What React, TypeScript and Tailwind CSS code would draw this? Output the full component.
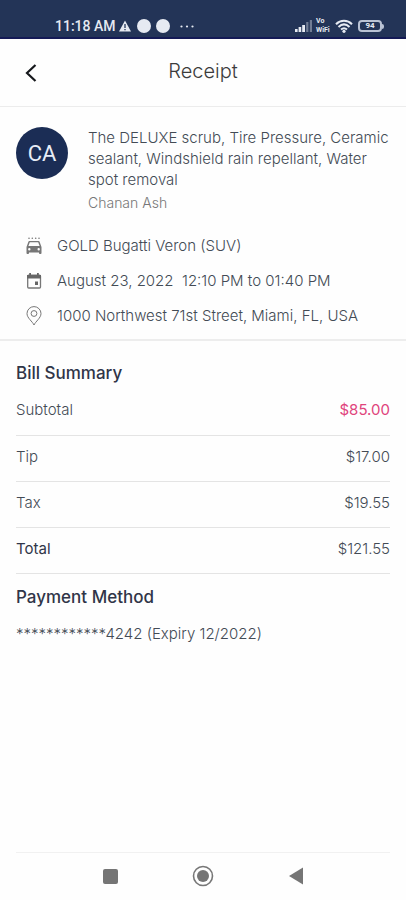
import type { ReactNode } from "react";
import { clsx } from "clsx";

type BillLine = {
  label: string;
  amount: string;
  highlight?: boolean;
  strong?: boolean;
};

const billLines: BillLine[] = [
  { label: "Subtotal", amount: "$85.00", highlight: true },
  { label: "Tip", amount: "$17.00" },
  { label: "Tax", amount: "$19.55" },
  { label: "Total", amount: "$121.55", strong: true },
];

function StatusBar() {
  return (
    <div className="flex h-[39px] items-end justify-between border-b-2 border-[#141a56] bg-[#233457] pr-[22px] pb-px pl-[55px] font-['Roboto',sans-serif] text-[#e6eaf2]">
      <div className="flex h-5 items-center">
        <span className="text-sm font-medium">11:18 AM</span>
        <svg className="ml-[3px] h-3 w-3" viewBox="0 0 12 12" aria-hidden="true">
          <path d="M6 0.5 12 11.5H0Z" fill="currentColor" />
          <path d="M6 4v4M6 9v1.3" stroke="#233457" strokeWidth="1.3" />
        </svg>
        <span className="ml-[6px] h-[14px] w-[14px] rounded-full bg-[#e6eaf2]" />
        <span className="ml-[5px] h-[14px] w-[14px] rounded-full bg-[#e6eaf2]" />
        <svg className="ml-[10px] h-[3px] w-[14px]" viewBox="0 0 14 3" fill="currentColor" aria-hidden="true">
          <circle cx="1.5" cy="1.5" r="1.1" />
          <circle cx="7" cy="1.5" r="1.1" />
          <circle cx="12.5" cy="1.5" r="1.1" />
        </svg>
      </div>
      <div className="flex h-5 items-center">
        <svg className="h-3 w-[18px]" viewBox="0 0 18 12" aria-hidden="true">
          <g fill="currentColor">
            <rect x="0" y="9" width="2.6" height="3" />
            <rect x="3.6" y="7" width="2.6" height="5" />
            <rect x="7.2" y="5" width="2.8" height="7" />
          </g>
          <g fill="currentColor" opacity="0.4">
            <rect x="11.2" y="2" width="2.2" height="10" />
            <rect x="14.8" y="0" width="2.2" height="12" />
          </g>
        </svg>
        <span className="ml-[3px] flex w-4 flex-col text-[7px] leading-[9px] font-bold">
          <span>Vo</span>
          <span>WiFi</span>
        </span>
        <svg className="ml-[3px] h-[14px] w-[18px]" viewBox="0 0 18 14" aria-hidden="true">
          <g fill="none" stroke="currentColor" strokeWidth="2">
            <path d="M1 5.2C5.5 0.6 12.5 0.6 17 5.2" />
            <path d="M3.5 8C7 4.6 11 4.6 14.5 8" />
            <path d="M6 10.6C8 8.8 10 8.8 12 10.6" />
          </g>
          <circle cx="9" cy="12.3" r="1.6" fill="currentColor" />
        </svg>
        <span className="ml-[5px] flex h-3 w-6 items-center justify-center rounded-[4px] border-2 border-[#b9c2d4] text-[8px] leading-none font-bold">
          94
        </span>
        <span className="h-[5px] w-[2px] rounded-r-sm bg-[#b9c2d4]" />
      </div>
    </div>
  );
}

function CarWashIcon() {
  return (
    <svg className="h-[17px] w-4" viewBox="0 0 16 17" aria-hidden="true">
      <g fill="#777">
        <circle cx="3" cy="1.2" r="0.8" />
        <circle cx="6.300" cy="1.2" r="0.8" />
        <circle cx="9.700" cy="1.2" r="0.8" />
        <circle cx="13" cy="1.2" r="0.8" />
        <path
          fillRule="evenodd"
          d="M3.4 4h9.2c.5 0 .8.3 1 .7L15.5 10v6c0 .6-.3 1-.8 1h-.9c-.5 0-.8-.4-.8-1v-.5H3v.5c0 .6-.3 1-.8 1h-.9c-.5 0-.8-.4-.8-1v-6l1.9-5.3c.2-.4.5-.7 1-.7ZM3.8 5.3 2.4 9h11.2l-1.4-3.7ZM3.3 11a1.2 1.2 0 1 0 0 2.4 1.2 1.2 0 0 0 0-2.4Zm9.4 0a1.2 1.2 0 1 0 0 2.4 1.2 1.2 0 0 0 0-2.4Z"
        />
      </g>
    </svg>
  );
}

function CalendarIcon() {
  return (
    <svg className="h-4 w-4" viewBox="0 0 16 16" aria-hidden="true">
      <rect x="1.7" y="2.2" width="12.8" height="12.8" rx="1" fill="none" stroke="#777" strokeWidth="1.3" />
      <path d="M1 2h14v3.5H1ZM3.2 0h1.8v3H3.2ZM11 0h1.8v3H11ZM9 8.5h3V12H9Z" fill="#666" />
    </svg>
  );
}

function PinIcon() {
  return (
    <svg className="h-5 w-4" viewBox="0 0 16 20" fill="none" stroke="#777" aria-hidden="true">
      <path d="M8 19C6.5 15.5 1 12 1 7.6a7 7 0 0 1 14 0C15 12 9.5 15.5 8 19Z" />
      <circle cx="8" cy="7.5" r="2.9" />
    </svg>
  );
}

function DetailRow({ icon, children }: { icon: ReactNode; children: ReactNode }) {
  return (
    <li className="flex min-h-[35px] items-center gap-[15px]">
      <span className="flex w-4 shrink-0 justify-center">{icon}</span>
      <span className="whitespace-pre-wrap">{children}</span>
    </li>
  );
}

export default function App() {
  return (
    <div className="flex min-h-screen flex-col bg-[#fefefe] font-['Inter',sans-serif] text-[15px] leading-[21px] text-[#434b55]">
      <StatusBar />

      <header className="grid h-[68px] grid-cols-[46px_1fr_46px] items-center border-b border-[#ececec] px-2">
        <button type="button" aria-label="Back" className="flex h-10 items-center justify-center">
          <svg className="h-[18px] w-3" viewBox="0 0 12 18" fill="none" stroke="#16181c" strokeWidth="2.2" aria-hidden="true">
            <path d="M10.5 1 2 9l8.500 8" />
          </svg>
        </button>
        <h1 className="pb-1 text-center text-xl font-light text-[#3c3c3c]">Receipt</h1>
      </header>

      <main className="flex grow flex-col">
        <section className="border-b-2 border-[#ededed] px-4 pt-5 pb-[6px]">
          <div className="flex items-start gap-5">
            <div className="flex h-[52px] w-[52px] shrink-0 items-center justify-center rounded-full bg-[#1b2d55] font-['Roboto',sans-serif] text-[22px] text-[#e8edf7]">
              CA
            </div>
            <div className="min-w-0">
              <h2 className="font-light">
                The DELUXE scrub, Tire Pressure, Ceramic sealant, Windshield rain repellant, Water spot removal
              </h2>
              <p className="pt-[2px] text-sm leading-[22px] font-light text-[#777]">Chanan Ash</p>
            </div>
          </div>
          <ul className="mt-[14px] pl-[10px] font-light">
            <DetailRow icon={<CarWashIcon />}>GOLD Bugatti Veron (SUV)</DetailRow>
            <DetailRow icon={<CalendarIcon />}>{"August 23, 2022  12:10 PM to 01:40 PM"}</DetailRow>
            <DetailRow icon={<PinIcon />}>1000 Northwest 71st Street, Miami, FL, USA</DetailRow>
          </ul>
        </section>

        <section className="px-4 pt-5">
          <h2 className="text-[17px] leading-6 font-medium text-[#303548]">Bill Summary</h2>
          <table className="mt-1 w-full">
            <tbody>
              {billLines.map((line) => (
                <tr key={line.label} className="h-[46px] border-b border-[#e4e4e4]">
                  <th
                    scope="row"
                    className={clsx(
                      "pb-1 text-left",
                      line.strong ? "font-normal text-[#303548]" : "font-light",
                    )}
                  >
                    {line.label}
                  </th>
                  <td
                    className={clsx(
                      "pb-1 text-right",
                      line.highlight ? "font-normal text-[#e0447c]" : "font-light",
                    )}
                  >
                    {line.amount}
                  </td>
                </tr>
              ))}
            </tbody>
          </table>
        </section>

        <section className="px-4 pt-[11px]">
          <h2 className="text-[17px] leading-6 font-medium text-[#303548]">Payment Method</h2>
          <p className="mt-[14px] font-light">************4242 (Expiry 12/2022)</p>
        </section>
      </main>

      <nav aria-label="System" className="mx-4 flex h-12 items-center justify-center gap-[69px] border-t border-[#f1f1f1] pb-px">
        <button type="button" aria-label="Recent apps" className="flex w-6 justify-center">
          <span className="h-[15px] w-[15px] rounded-[2px] bg-[#757575]" />
        </button>
        <button type="button" aria-label="Home" className="flex w-6 justify-center">
          <svg className="h-[22px] w-[22px]" viewBox="0 0 22 22" aria-hidden="true">
            <circle cx="11" cy="11" r="9.5" fill="none" stroke="#777" strokeWidth="1.6" />
            <circle cx="11" cy="11" r="6" fill="#757575" />
          </svg>
        </button>
        <button type="button" aria-label="Back to previous app" className="flex w-6 justify-center">
          <svg className="h-[18px] w-[14px]" viewBox="0 0 14 18" fill="#757575" aria-hidden="true">
            <path d="M14 0.5v17L0 9Z" />
          </svg>
        </button>
      </nav>
    </div>
  );
}
